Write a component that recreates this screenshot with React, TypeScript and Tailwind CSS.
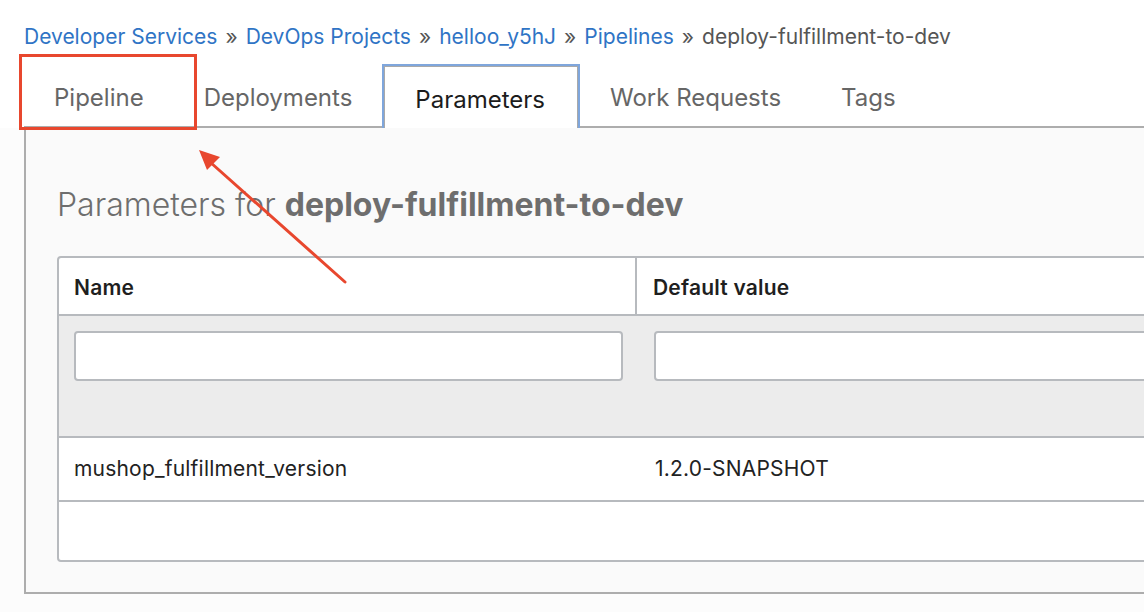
const crumbs = ["Developer Services", "DevOps Projects", "helloo_y5hJ", "Pipelines"];

const tabs = ["Pipeline", "Deployments", "Parameters", "Work Requests", "Tags"];

function Breadcrumb() {
  return (
    <div className="pl-[24px] pt-[23px] h-[64px] text-[21px] leading-[28px] text-[#555]">
      {crumbs.map((c) => (
        <span key={c}>
          <span className="text-[#2f74c5]">{c}</span>
          <span className="px-[8px]">»</span>
        </span>
      ))}
      <span>deploy-fulfillment-to-dev</span>
    </div>
  );
}

function Tabs() {
  return (
    <div className="ml-[24px] flex items-end h-[64px] border-b-2 border-[#adadad]">
      {tabs.map((t) =>
        t === "Parameters" ? (
          <div
            key={t}
            className="relative -mb-[2px] h-[64px] border-2 border-b-0 border-[#7fa6dc] bg-white"
          >
            <div className="h-full border border-b-0 border-[#a9a9a9] pl-[30px] pr-[32px] pt-[18px] text-[24px] leading-[30px] text-[#1c1c1c]">
              {t}
            </div>
          </div>
        ) : (
          <div key={t} className="px-[30px] h-[62px] pt-[19px] text-[24px] leading-[30px] text-[#666]">
            {t}
          </div>
        )
      )}
    </div>
  );
}

function ParamTable() {
  return (
    <div className="w-[1120px] rounded-[4px] border-2 border-[#b7babe] bg-white overflow-hidden">
      <div className="flex h-[58px] border-b-2 border-[#b7babe] text-[21px] font-semibold tracking-[0.2px] text-[#1f1f1f]">
        <div className="w-[578px] border-r-2 border-[#b7babe] flex items-center pt-[3px] pl-[15px]">Name</div>
        <div className="flex-1 flex items-center pt-[3px] pl-[16px]">Default value</div>
      </div>
      <div className="flex h-[122px] bg-[#ececec] border-b-2 border-[#b7babe] pt-[15px]">
        <div className="w-[580px] pl-[15px] pr-[16px]">
          <div className="h-[50px] rounded-[4px] border-2 border-[#b7babe] bg-white" />
        </div>
        <div className="flex-1 pl-[15px]">
          <div className="h-[50px] rounded-[4px] border-2 border-[#b7babe] bg-white" />
        </div>
      </div>
      <div className="flex h-[64px] border-b-2 border-[#b7babe] items-center text-[21px] tracking-[0.2px] text-[#222]">
        <div className="w-[580px] pl-[15px]">mushop_fulfillment_version</div>
        <div className="flex-1 pl-[16px]">1.2.0-SNAPSHOT</div>
      </div>
      <div className="h-[58px]" />
    </div>
  );
}

function Annotation() {
  return (
    <>
      <div className="absolute left-[19px] top-[54px] w-[178px] h-[76px] border-[3px] border-[#e8472e]" />
      <svg className="absolute left-0 top-0" width="1144" height="612" viewBox="0 0 1144 612">
        <line x1="345" y1="282" x2="210" y2="162" stroke="#e8472e" strokeWidth="3" strokeLinecap="round" />
        <polygon points="199,150 220,157 207,170" fill="#e8472e" />
      </svg>
    </>
  );
}

export default function App() {
  return (
    <div
      className="relative w-[1144px] h-[612px] overflow-hidden bg-[#fcfcfc]"
      style={{ fontFamily: 'Inter, "Liberation Sans", Arial, sans-serif' }}
    >
      <div className="bg-white">
        <Breadcrumb />
        <Tabs />
      </div>
      <div className="ml-[24px] h-[466px] border-l-2 border-b-2 border-[#adadad] bg-[#fafafa] pl-[31px]">
        <h1 className="pt-[57px] h-[128px] text-[32px] leading-[40px] text-[#6e6e6e] font-light">
          Parameters for <span className="font-bold">deploy-fulfillment-to-dev</span>
        </h1>
        <ParamTable />
      </div>
      <Annotation />
    </div>
  );
}
